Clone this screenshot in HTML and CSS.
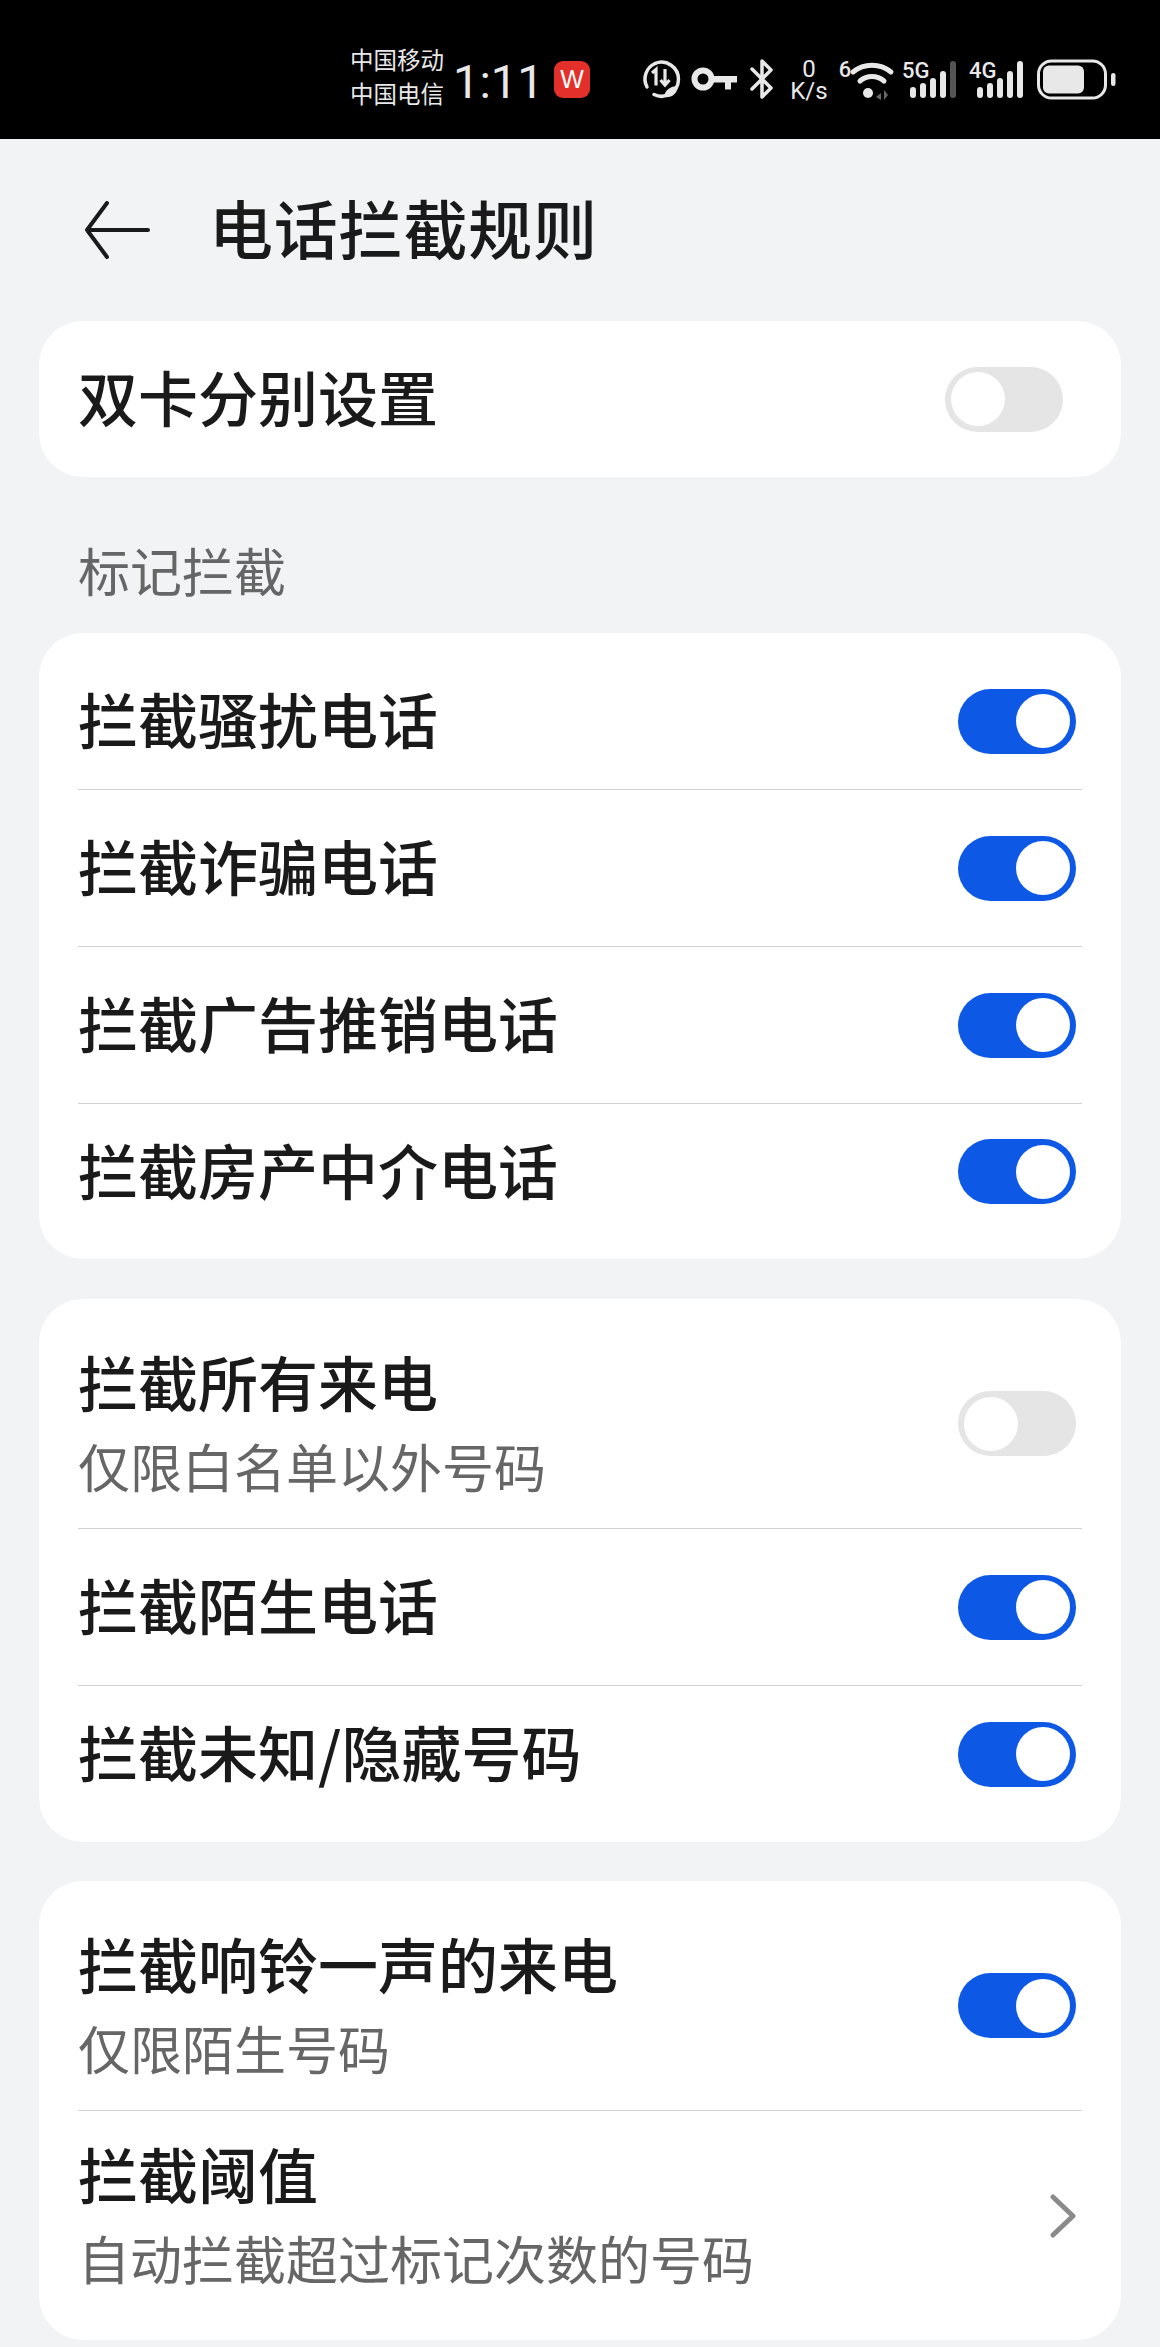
FILE: index.html
```html
<!DOCTYPE html>
<html lang="zh-CN">
<head>
<meta charset="utf-8">
<title>电话拦截规则</title>
<link rel="stylesheet" href="styles.css">
</head>
<body>
<div class="status">
  <div class="carriers"><span>中国移动</span><span>中国电信</span></div>
  <div class="time">1:11</div>
  <div class="app-badge">W</div>
  <svg class="status-icons" width="490" height="60" viewBox="640 50 490 60" fill="none">
    <path d="M655 62.5A17 17 0 1 1 654 93.5" stroke="#e8e8e8" stroke-width="3.5" stroke-linecap="round"/>
    <path d="M655 62.5A17 17 0 0 0 647 86" stroke="#e8e8e8" stroke-width="3.5" stroke-linecap="round"/>
    <path d="M652 72l4-3.5v16M665 68v15M660.500 79l4.500 5 4.500-5" stroke="#e8e8e8" stroke-width="3.200"/>
    <path d="M664 96c1-7 6-11 14-11-1 8-6 12-14 11z" fill="#e8e8e8"/>
    <circle cx="703" cy="78" r="8.500" stroke="#e8e8e8" stroke-width="6"/>
    <path d="M712 75h25v6.500h-6v7h-6v-7h-13z" fill="#e8e8e8"/>
    <path d="M752 68l19 19-9 9V60l9 9-19 19" stroke="#e8e8e8" stroke-width="3.500" stroke-linejoin="round" stroke-linecap="round"/>
    <text class="si-num" x="809" y="76" text-anchor="middle">0</text>
    <text class="si-num" x="809" y="98" text-anchor="middle">K/s</text>
    <text class="si-small" x="845" y="76" text-anchor="middle">6</text>
    <path d="M853 71c11-9 27-9 38 0" stroke="#e8e8e8" stroke-width="5" stroke-linecap="round"/>
    <path d="M860 80c7-6 17-6 24 0" stroke="#e8e8e8" stroke-width="5" stroke-linecap="round"/>
    <circle cx="868" cy="92" r="5" fill="#e8e8e8"/>
    <path d="M881 92l-5 4 5 3zM884 89v10l4-5z" fill="#666"/>
    <text class="si-small" x="902" y="77">5G</text>
    <rect x="910" y="86" width="6" height="11" rx="3" fill="#e8e8e8"/>
    <rect x="920" y="82" width="6" height="15" rx="3" fill="#e8e8e8"/>
    <rect x="930" y="77" width="6" height="20" rx="3" fill="#e8e8e8"/>
    <rect x="940" y="70" width="6" height="27" rx="3" fill="#e8e8e8"/>
    <rect x="950" y="60" width="6" height="37" rx="3" fill="#555"/>
    <text class="si-small" x="969" y="77">4G</text>
    <rect x="977" y="86" width="6" height="11" rx="3" fill="#e8e8e8"/>
    <rect x="987" y="82" width="6" height="15" rx="3" fill="#e8e8e8"/>
    <rect x="997" y="77" width="6" height="20" rx="3" fill="#e8e8e8"/>
    <rect x="1007" y="70" width="6" height="27" rx="3" fill="#e8e8e8"/>
    <rect x="1017" y="60" width="6" height="37" rx="3" fill="#e8e8e8"/>
    <rect x="1038.500" y="60" width="67" height="37" rx="13" stroke="#e8e8e8" stroke-width="3"/>
    <rect x="1043" y="64.500" width="41" height="28" rx="6" fill="#e8e8e8"/>
    <rect x="1111" y="72" width="4.500" height="13" rx="2.200" fill="#e8e8e8"/>
  </svg>
</div>

<header class="header">
  <svg class="back" width="66" height="58" viewBox="0 0 66 58" fill="none">
    <path d="M23 2L3 29l20 27M3 29h61" stroke="#1a1a1a" stroke-width="4" stroke-linecap="round" stroke-linejoin="round"/>
  </svg>
  <h1 class="title">电话拦截规则</h1>
</header>

<main class="content">
  <section class="card card-single">
    <div class="row row-solo">
      <div class="label">双卡分别设置</div>
      <div class="toggle"></div>
    </div>
  </section>

  <div class="section-title">标记拦截</div>

  <section class="card">
    <div class="row row-first"><div class="label">拦截骚扰电话</div><div class="toggle on"></div></div>
    <div class="row"><div class="label">拦截诈骗电话</div><div class="toggle on"></div></div>
    <div class="row"><div class="label">拦截广告推销电话</div><div class="toggle on"></div></div>
    <div class="row row-last"><div class="label">拦截房产中介电话</div><div class="toggle on"></div></div>
  </section>

  <section class="card card-gap">
    <div class="row row-tall">
      <div class="stack"><div class="label">拦截所有来电</div><div class="sub">仅限白名单以外号码</div></div>
      <div class="toggle"></div>
    </div>
    <div class="row"><div class="label">拦截陌生电话</div><div class="toggle on"></div></div>
    <div class="row row-last row-last-full"><div class="label">拦截未知/隐藏号码</div><div class="toggle on"></div></div>
  </section>

  <section class="card card-gap card-tight">
    <div class="row row-tall">
      <div class="stack"><div class="label">拦截响铃一声的来电</div><div class="sub">仅限陌生号码</div></div>
      <div class="toggle on"></div>
    </div>
    <div class="row row-tall row-end">
      <div class="stack"><div class="label">拦截阈值</div><div class="sub">自动拦截超过标记次数的号码</div></div>
      <svg class="chevron" width="26" height="44" viewBox="0 0 26 44" fill="none">
        <path d="M3 3l20 19L3 41" stroke="#8a8a8a" stroke-width="5" stroke-linecap="round" stroke-linejoin="round"/>
      </svg>
    </div>
  </section>
</main>
</body>
</html>
```

FILE: styles.css
```css
* { box-sizing: border-box; }

html, body {
  margin: 0;
  padding: 0;
}

body {
  width: 1160px;
  height: 2347px;
  overflow: hidden;
  background: #f1f3f5;
  color: #1a1a1a;
  font-family: "Noto Sans CJK SC", "Noto Sans", sans-serif;
}

.status {
  height: 139px;
  background: #000;
  display: flex;
  align-items: center;
  padding: 24px 0 0 350px;
  color: #e8e8e8;
}

.carriers {
  display: flex;
  flex-direction: column;
  font-size: 23.5px;
  line-height: 34px;
  width: 103px;
  margin-top: -12px;
}

.time {
  font-family: Roboto, "Liberation Sans", sans-serif;
  font-weight: 400;
  font-size: 47px;
  line-height: 40px;
  width: 101px;
}

.app-badge {
  width: 36px;
  height: 37px;
  border-radius: 9px;
  background: #e3302a;
  color: #fff;
  font-family: "Liberation Sans", sans-serif;
  font-size: 25px;
  line-height: 37px;
  text-align: center;
  margin-top: -4px;
}

.status-icons {
  margin-left: 50px;
  margin-top: -2px;
  flex: none;
}

.si-num {
  font-family: Roboto, "Liberation Sans", sans-serif;
  font-size: 24px;
  fill: #e8e8e8;
}

.si-small {
  font-family: Roboto, "Liberation Sans", sans-serif;
  font-size: 22px;
  font-weight: 500;
  fill: #e8e8e8;
}

.header {
  height: 182px;
  padding: 0 0 0 84px;
  display: flex;
  align-items: center;
}

.back {
  flex: none;
}

.title {
  margin: 0 0 8px 59px;
  font-size: 64px;
  line-height: 90px;
  font-weight: 500;
  letter-spacing: 0.8px;
}

.content {
  padding: 0 39px;
}

.card {
  background: #fff;
  border-radius: 44px;
  padding: 20px 39px;
}

.card-single {
  height: 156px;
  padding: 0 39px;
}

.card-gap {
  margin-top: 40px;
}

.card-tight {
  margin-top: 39px;
}

.section-title {
  height: 156px;
  padding-left: 39px;
  font-size: 52px;
  line-height: 186px;
  color: #666;
}

.row {
  height: 157px;
  padding-right: 6px;
  display: flex;
  align-items: center;
  justify-content: space-between;
  border-bottom: 1px solid #d2d2d2;
}

.row-first {
  height: 137px;
}

.row-last {
  height: 135px;
  border-bottom: 0;
}

.row-last-full {
  height: 136px;
}

.row-solo {
  height: 156px;
  padding-right: 19px;
  border-bottom: 0;
}

.row-tall {
  height: 210px;
}

.row-end {
  height: 209px;
  border-bottom: 0;
}

.row > .label {
  padding-bottom: 6px;
}

.label {
  font-size: 60px;
  line-height: 82px;
  font-weight: 500;
}

.sub {
  font-size: 52px;
  line-height: 82px;
  margin-top: 3px;
  color: #666;
}

.stack {
  display: flex;
  flex-direction: column;
  padding-top: 0;
}

.toggle {
  flex: none;
  width: 118px;
  height: 65px;
  border-radius: 33px;
  background: #e5e5e6;
  display: flex;
  align-items: center;
  padding: 0 6px;
}

.toggle::before {
  content: "";
  width: 54px;
  height: 54px;
  border-radius: 50%;
  background: #fff;
}

.toggle.on {
  background: #0d59e6;
  justify-content: flex-end;
}

.chevron {
  flex: none;
  margin-right: 0;
}
```
